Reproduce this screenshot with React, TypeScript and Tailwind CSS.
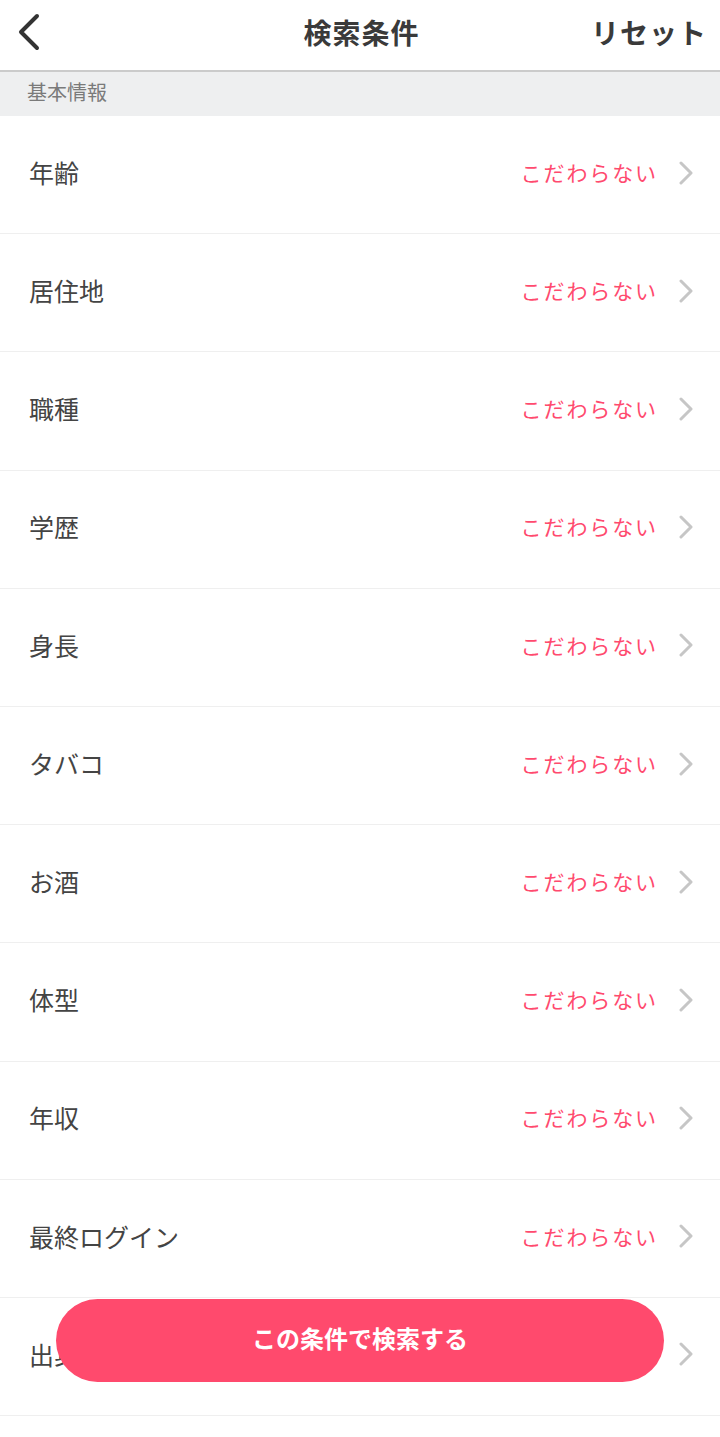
const rows = [
  "年齢",
  "居住地",
  "職種",
  "学歴",
  "身長",
  "タバコ",
  "お酒",
  "体型",
  "年収",
  "最終ログイン",
  "出身地",
];

function Chevron() {
  return (
    <svg width="16" height="24" viewBox="0 0 16 24" fill="none" className="shrink-0">
      <path d="M3 2 L13 12 L3 22" stroke="#c6c6c6" strokeWidth="3" strokeLinecap="round" strokeLinejoin="round" />
    </svg>
  );
}

export default function App() {
  return (
    <div
      className="relative h-[1437px] overflow-hidden bg-white"
      style={{ fontFamily: '"Noto Sans CJK JP", "Noto Sans", sans-serif' }}
    >
      <header className="flex h-[72px] items-center justify-between px-4 pb-[7px] border-b-2 border-[#cbcbcb]">
        <button className="w-[140px] h-full flex items-center">
          <svg width="26" height="40" viewBox="0 0 26 40" fill="none">
            <path d="M21 4 L5 20 L21 36" stroke="#333" strokeWidth="4" strokeLinecap="round" strokeLinejoin="round" />
          </svg>
        </button>
        <h1 className="text-[28px] font-bold text-[#3a3a3a] tracking-[1px] whitespace-nowrap">検索条件</h1>
        <button className="w-[140px] text-right text-[28px] font-bold text-[#3a3a3a] tracking-[1px] whitespace-nowrap -mr-[3px]">
          リセット
        </button>
      </header>

      <div className="h-[44px] bg-[#eeeff0] flex items-center px-[27px] pb-[4px] text-[20px] text-[#7a7a7a]">
        基本情報
      </div>

      <ul>
        {rows.map((label) => (
          <li
            key={label}
            className="h-[118.2px] flex items-center justify-between pl-[29px] pr-[26px] pb-[4px] border-b border-[#efefef]"
          >
            <span className="text-[25px] text-[#444]">{label}</span>
            <span className="flex items-center gap-[20px]">
              <span className="text-[21px] text-[#ff4a6e] tracking-[1.9px]">こだわらない</span>
              <Chevron />
            </span>
          </li>
        ))}
      </ul>

      <button className="absolute left-[56px] right-[56px] bottom-[55px] h-[83px] rounded-full bg-[#ff4a6d] text-white text-[24px] font-bold pb-[6px]">
        この条件で検索する
      </button>
    </div>
  );
}
